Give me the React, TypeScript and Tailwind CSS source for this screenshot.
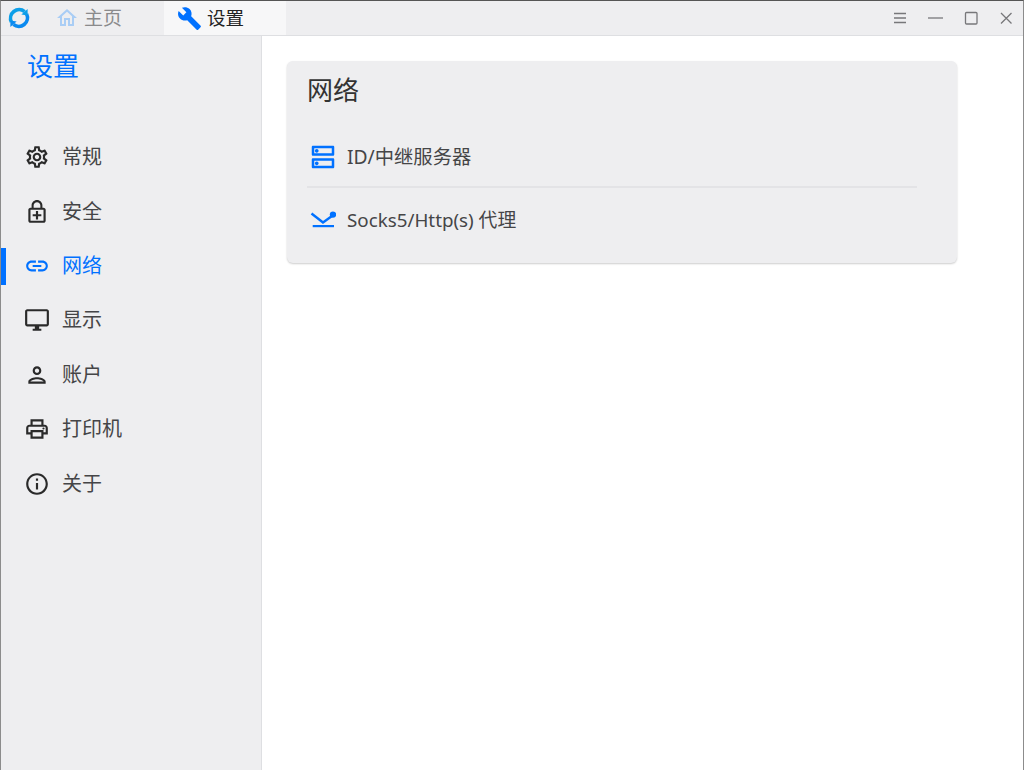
import React from 'react'
import {
  MdOutlineSettings,
  MdOutlineEnhancedEncryption,
  MdLink,
  MdOutlineDesktopWindows,
  MdOutlinePerson,
  MdOutlinePrint,
  MdInfoOutline,
  MdBuild,
  MdOutlineHome,
  MdOutlineDns,
} from 'react-icons/md'

const font = "font-['Noto_Sans','Noto_Sans_CJK_SC',sans-serif]"

const navItems = [
  { label: '常规', icon: MdOutlineSettings },
  { label: '安全', icon: MdOutlineEnhancedEncryption },
  { label: '网络', icon: MdLink, active: true },
  { label: '显示', icon: MdOutlineDesktopWindows },
  { label: '账户', icon: MdOutlinePerson },
  { label: '打印机', icon: MdOutlinePrint },
  { label: '关于', icon: MdInfoOutline },
]

const Logo = () => (
  <svg width="22" height="22" viewBox="0 0 22 22" fill="none" strokeWidth="3.6">
    <path d="M16.6 4.6A8.6 8.6 0 0 0 3.4 15" stroke="#0d9fe8" />
    <path d="M5.4 17.4A8.6 8.6 0 0 0 18.6 7" stroke="#0a8af0" />
    <path d="M13.4 7.6 19.6 2v6.6z" fill="#0d9fe8" />
    <path d="M8.6 14.4 2.4 20v-6.6z" fill="#0a8af0" />
  </svg>
)

const ProxyIcon = () => (
  <svg width="26" height="20" viewBox="0 0 26 20" fill="#0071ff">
    <path d="M1.5 2.5 13 11.5l9-6.5" fill="none" stroke="#0071ff" strokeWidth="2.4" />
    <circle cx="23" cy="3.6" r="3.2" />
    <rect x="2.7" y="14" width="21.3" height="2.2" />
  </svg>
)

const TitleBar = () => (
  <div className="flex h-[35px] shrink-0 items-center border-b border-[#dedfe2] bg-[#eeeef0]">
    <div className="ml-[7px] mr-[12px] flex w-[22px] items-center justify-center">
      <Logo />
    </div>
    <div className="flex h-full w-[122px] items-center pl-[13px] text-[#8a8a8c]">
      <MdOutlineHome size={24} className="text-[#a9cdf5]" />
      <span className="ml-[5px] text-[19px]">主页</span>
    </div>
    <div className="flex h-full w-[122px] items-center bg-[#f7f7f8] pl-[13px] text-[#222]">
      <MdBuild size={25} className="text-[#0071ff]" />
      <span className="ml-[5px] text-[18.5px]">设置</span>
    </div>
    <div className="ml-auto flex items-center gap-[19.5px] pr-[9px] text-[#77777a]">
      <svg width="16" height="16" viewBox="0 0 16 16" stroke="currentColor" strokeWidth="1.3" fill="none">
        <path d="M2 3.5h12M2 8h12M2 12.5h12" />
      </svg>
      <svg width="16" height="16" viewBox="0 0 16 16" stroke="currentColor" strokeWidth="1.3" fill="none">
        <path d="M1 8h15" />
      </svg>
      <svg width="16" height="16" viewBox="0 0 16 16" stroke="currentColor" strokeWidth="1.3" fill="none">
        <rect x="2.5" y="2.5" width="11.5" height="11.5" rx="1" />
      </svg>
      <svg width="16" height="16" viewBox="0 0 16 16" stroke="currentColor" strokeWidth="1.3" fill="none">
        <path d="m3 3 10.5 10.5M13.5 3 3 13.5" />
      </svg>
    </div>
  </div>
)

const Sidebar = () => (
  <aside className="flex w-[261px] shrink-0 flex-col border-r border-[#dedfe2] bg-[#eeeef0]">
    <div className="h-[94px] pl-[26px] pt-[12px] text-[26px] leading-[36px] text-[#0071ff]">设置</div>
    <nav className="flex flex-col">
      {navItems.map(({ label, icon: Icon, active }) => (
        <div key={label} className="relative flex h-[54.4px] items-center pl-[23px]">
          {active && <div className="absolute left-0 top-[9px] h-[37px] w-[5px] bg-[#0071ff]" />}
          <Icon size={26} className={active ? 'text-[#0071ff]' : 'text-[#2a2a2a]'} />
          <span className={`ml-[12px] text-[20px] ${active ? 'text-[#0071ff]' : 'text-[#454547]'}`}>{label}</span>
        </div>
      ))}
    </nav>
  </aside>
)

const NetworkCard = () => (
  <div className="ml-[25px] mt-[25px] h-[202px] w-[670px] rounded-[6px] bg-[#eeeef0] px-[20px] shadow-[0_1px_2px_rgba(0,0,0,0.2)]">
    <h2 className="pt-[10px] text-[26px] leading-[38px] text-[#333]">网络</h2>
    <div className="mt-[9px] w-[610px]">
      <div className="flex h-[70px] items-center border-b-2 border-[#e3e3e6] pt-[10px]">
        <MdOutlineDns size={30} className="ml-[1px] text-[#0071ff]" />
        <span className="ml-[9px] text-[19.3px] text-[#454547]">ID/中继服务器</span>
      </div>
      <div className="flex h-[65px] items-center">
        <div className="ml-[3px]">
          <ProxyIcon />
        </div>
        <span className="ml-[11px] text-[18.8px] text-[#454547]">Socks5/Http(s) 代理</span>
      </div>
    </div>
  </div>
)

const App: React.FC = () => {
  return (
    <div className={`flex h-[770px] w-[1024px] flex-col overflow-hidden border-x border-t border-x-[#8c8c8c] border-t-[#555] bg-white ${font}`}>
      <TitleBar />
      <div className="flex min-h-0 flex-1">
        <Sidebar />
        <main className="flex-1 bg-white">
          <NetworkCard />
        </main>
      </div>
    </div>
  )
}

export default App
